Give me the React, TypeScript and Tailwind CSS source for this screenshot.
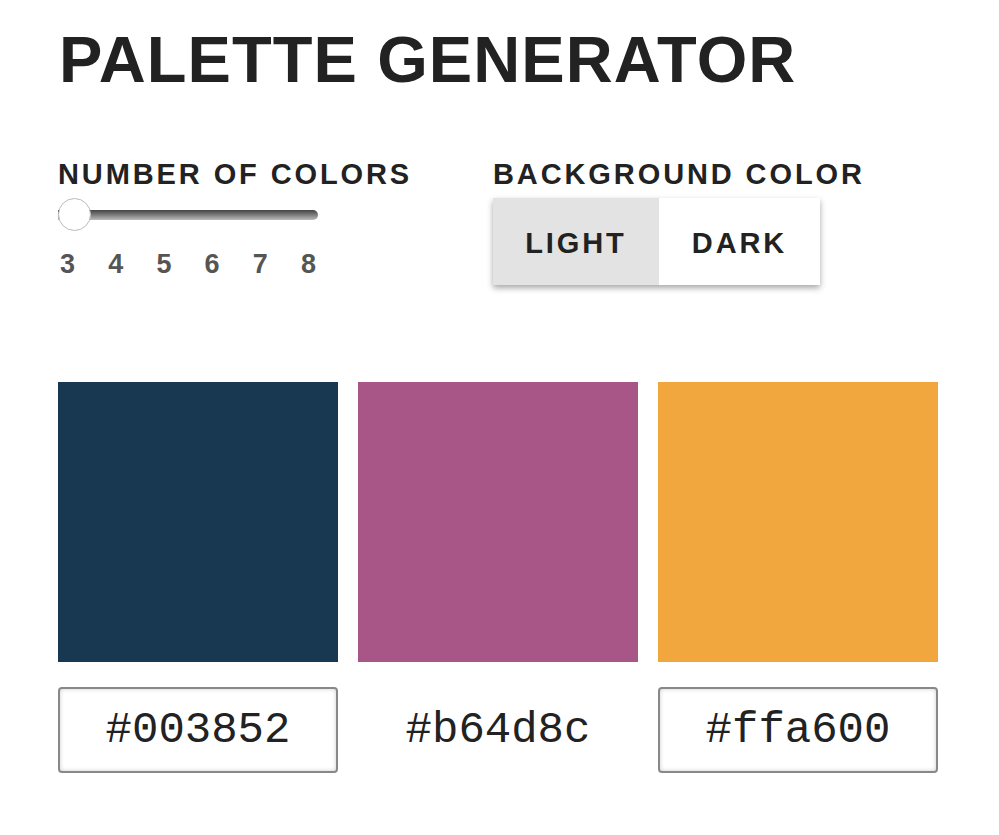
import { useState } from "react";

const SWATCHES = [
    { hex: "#003852", fill: "bg-[#173850]", boxed: true },
    { hex: "#b64d8c", fill: "bg-[#a85688]", boxed: false },
    { hex: "#ffa600", fill: "bg-[#f1a73e]", boxed: true },
];

const STEPS = [3, 4, 5, 6, 7, 8];

export default function App() {
    const [mode, setMode] = useState<"light" | "dark">("light");

    return (
        <div className="min-h-screen bg-white text-[#222] font-['Liberation_Sans',Arial,sans-serif] pl-[58px] pt-[27px]">
            <h1 className="text-[65px] leading-none font-bold tracking-[1.1px] pl-[1px]">PALETTE GENERATOR</h1>

            {/* Controls */}
            <div className="flex mt-[68px]">
                <div className="flex flex-col w-[435px]">
                    <span className="text-[29px] leading-none font-bold tracking-[0.1em] whitespace-nowrap">NUMBER OF COLORS</span>
                    <div className="relative flex items-center h-[33px] mt-[9px] w-[260px]">
                        <div className="h-[10px] w-full rounded-r-full bg-gradient-to-b from-[#444] to-[#bbb]" />
                        <div className="absolute left-0 top-0 w-[33px] h-[33px] rounded-full bg-white border border-[#bbb]" />
                    </div>
                    <div className="flex justify-between w-[258px] pl-[2px] mt-[20px] text-[27px] leading-none font-bold text-[#555]">
                        {STEPS.map((n) => (
                            <span key={n}>{n}</span>
                        ))}
                    </div>
                </div>

                <div className="flex flex-col">
                    <span className="text-[29px] leading-none font-bold tracking-[0.1em] whitespace-nowrap">BACKGROUND COLOR</span>
                    <div className="flex mt-[9px] h-[87px] w-fit shadow-[0_3px_6px_rgba(0,0,0,0.35)]">
                        <button
                            onClick={() => setMode("light")}
                            className={`w-[166px] pt-[4px] text-[29px] font-bold tracking-[0.1em] ${mode === "light" ? "bg-[#e3e3e3]" : "bg-white"}`}
                        >
                            LIGHT
                        </button>
                        <button
                            onClick={() => setMode("dark")}
                            className={`w-[161px] pt-[4px] text-[29px] font-bold tracking-[0.1em] ${mode === "dark" ? "bg-[#e3e3e3]" : "bg-white"}`}
                        >
                            DARK
                        </button>
                    </div>
                </div>
            </div>

            {/* Swatches */}
            <div className="flex gap-[20px] mt-[97px]">
                {SWATCHES.map((s) => (
                    <div key={s.hex} className="flex flex-col w-[280px]">
                        <div className={`h-[280px] ${s.fill}`} />
                        <div
                            className={`mt-[25px] h-[86px] flex items-center justify-center font-['Liberation_Mono',monospace] text-[44px] ${
                                s.boxed ? "border-2 border-[#888] rounded-[4px] shadow-[inset_0_0_4px_rgba(0,0,0,0.2)]" : ""
                            }`}
                        >
                            {s.hex}
                        </div>
                    </div>
                ))}
            </div>
        </div>
    );
}
